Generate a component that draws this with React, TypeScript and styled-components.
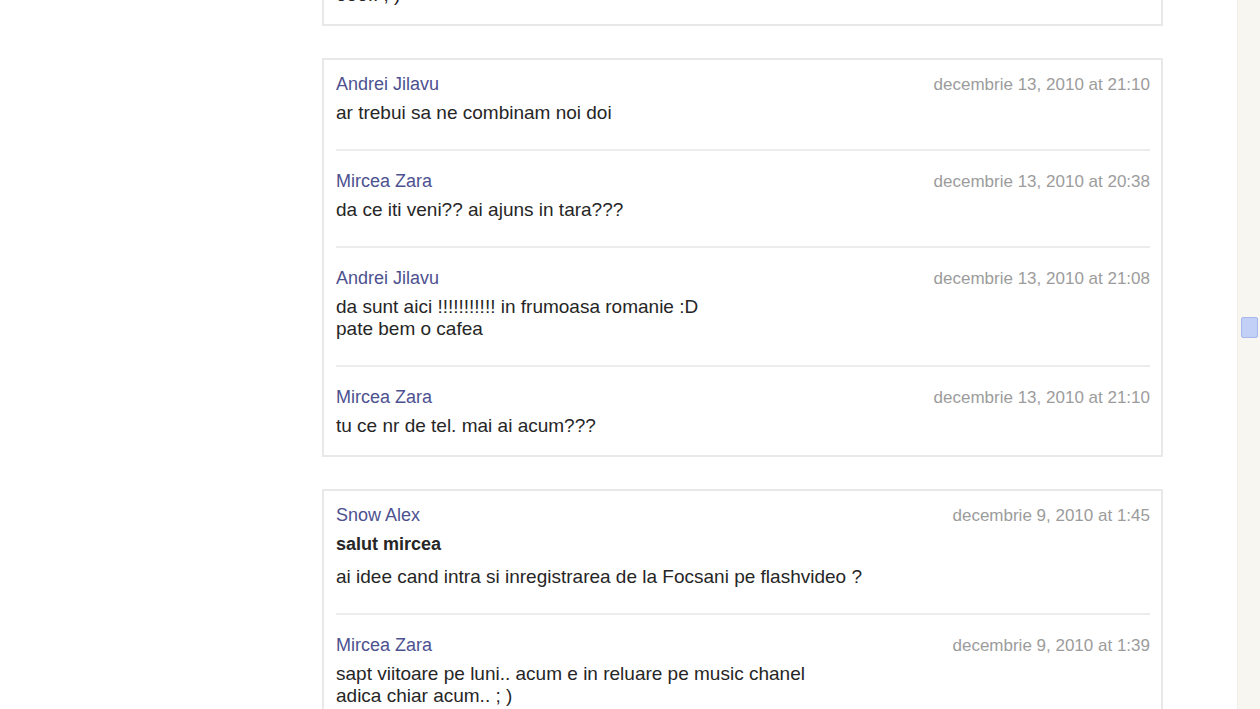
import styled, { createGlobalStyle } from "styled-components";

const GlobalStyle = createGlobalStyle`
  html, body {
    margin: 0;
    padding: 0;
    background: #ffffff;
    overflow: hidden;
  }
  body {
    font-family: "Liberation Sans", Arial, sans-serif;
  }
`;

const Page = styled.div`
  display: flex;
  width: 1260px;
  height: 709px;
  overflow: hidden;
  background: #ffffff;
`;

const Main = styled.div`
  flex: 1;
  padding-left: 322px;
`;

const Feed = styled.div`
  width: 841px;
  display: flex;
  flex-direction: column;
  gap: 32px;
`;

const Card = styled.div<{ $shift?: number }>`
  border: 2px solid #e8e8e8;
  padding: 0 11px 0 12px;
  background: #fff;
  margin-top: ${(p) => p.$shift ?? 0}px;
`;

const Entry = styled.div`
  padding: 19px 0 25px;
  border-top: 2px solid #ececec;
  &:first-child {
    border-top: none;
    padding-top: 13px;
  }
  &:last-child {
    padding-bottom: 18px;
  }
`;

const Header = styled.div`
  display: flex;
  justify-content: space-between;
  align-items: baseline;
  height: 22px;
  line-height: 22px;
`;

const Name = styled.span`
  font-size: 18px;
  color: #4d5190;
`;

const Date = styled.span`
  font-size: 17px;
  color: #9c9c9c;
`;

const Message = styled.div<{ $bold?: boolean }>`
  margin-top: 7px;
  font-size: ${(p) => (p.$bold ? 18 : 19)}px;
  font-weight: ${(p) => (p.$bold ? "bold" : "normal")};
  line-height: 22px;
  color: #262626;
  & + & {
    margin-top: 11px;
  }
`;

const Scrollbar = styled.div`
  width: 22px;
  background: #f7f6f1;
  border-left: 1px solid #efeee8;
  display: flex;
  flex-direction: column;
  align-items: center;
  padding-top: 317px;
`;

const Thumb = styled.div`
  width: 15px;
  height: 19px;
  background: #c2cff6;
  border: 1px solid #a8b8ec;
  border-radius: 2px;
`;

type Post = {
  name: string;
  date: string;
  lines: { text: string[]; bold?: boolean }[];
};

const threads: { shift?: number; posts: Post[] }[] = [
  {
    shift: -82,
    posts: [
      {
        name: "Mircea Zara",
        date: "decembrie 13, 2010 at 21:12",
        lines: [{ text: ["hai ca vb", "ooo.. ; )"] }],
      },
    ],
  },
  {
    posts: [
      {
        name: "Andrei Jilavu",
        date: "decembrie 13, 2010 at 21:10",
        lines: [{ text: ["ar trebui sa ne combinam noi doi"] }],
      },
      {
        name: "Mircea Zara",
        date: "decembrie 13, 2010 at 20:38",
        lines: [{ text: ["da ce iti veni?? ai ajuns in tara???"] }],
      },
      {
        name: "Andrei Jilavu",
        date: "decembrie 13, 2010 at 21:08",
        lines: [
          {
            text: [
              "da sunt aici !!!!!!!!!!! in frumoasa romanie :D",
              "pate bem o cafea",
            ],
          },
        ],
      },
      {
        name: "Mircea Zara",
        date: "decembrie 13, 2010 at 21:10",
        lines: [{ text: ["tu ce nr de tel. mai ai acum???"] }],
      },
    ],
  },
  {
    posts: [
      {
        name: "Snow Alex",
        date: "decembrie 9, 2010 at 1:45",
        lines: [
          { text: ["salut mircea"], bold: true },
          {
            text: [
              "ai idee cand intra si inregistrarea de la Focsani pe flashvideo ?",
            ],
          },
        ],
      },
      {
        name: "Mircea Zara",
        date: "decembrie 9, 2010 at 1:39",
        lines: [
          {
            text: [
              "sapt viitoare pe luni.. acum e in reluare pe music chanel",
              "adica chiar acum.. ; )",
            ],
          },
        ],
      },
    ],
  },
];

const App = () => {
  return (
    <>
      <GlobalStyle />
      <Page>
        <Main>
          <Feed>
            {threads.map((t, i) => (
              <Card key={i} $shift={t.shift}>
                {t.posts.map((p, j) => (
                  <Entry key={j}>
                    <Header>
                      <Name>{p.name}</Name>
                      <Date>{p.date}</Date>
                    </Header>
                    {p.lines.map((m, k) => (
                      <Message key={k} $bold={m.bold}>
                        {m.text.map((line, n) => (
                          <div key={n}>{line}</div>
                        ))}
                      </Message>
                    ))}
                  </Entry>
                ))}
              </Card>
            ))}
          </Feed>
        </Main>
        <Scrollbar>
          <Thumb />
        </Scrollbar>
      </Page>
    </>
  );
};

export default App;
